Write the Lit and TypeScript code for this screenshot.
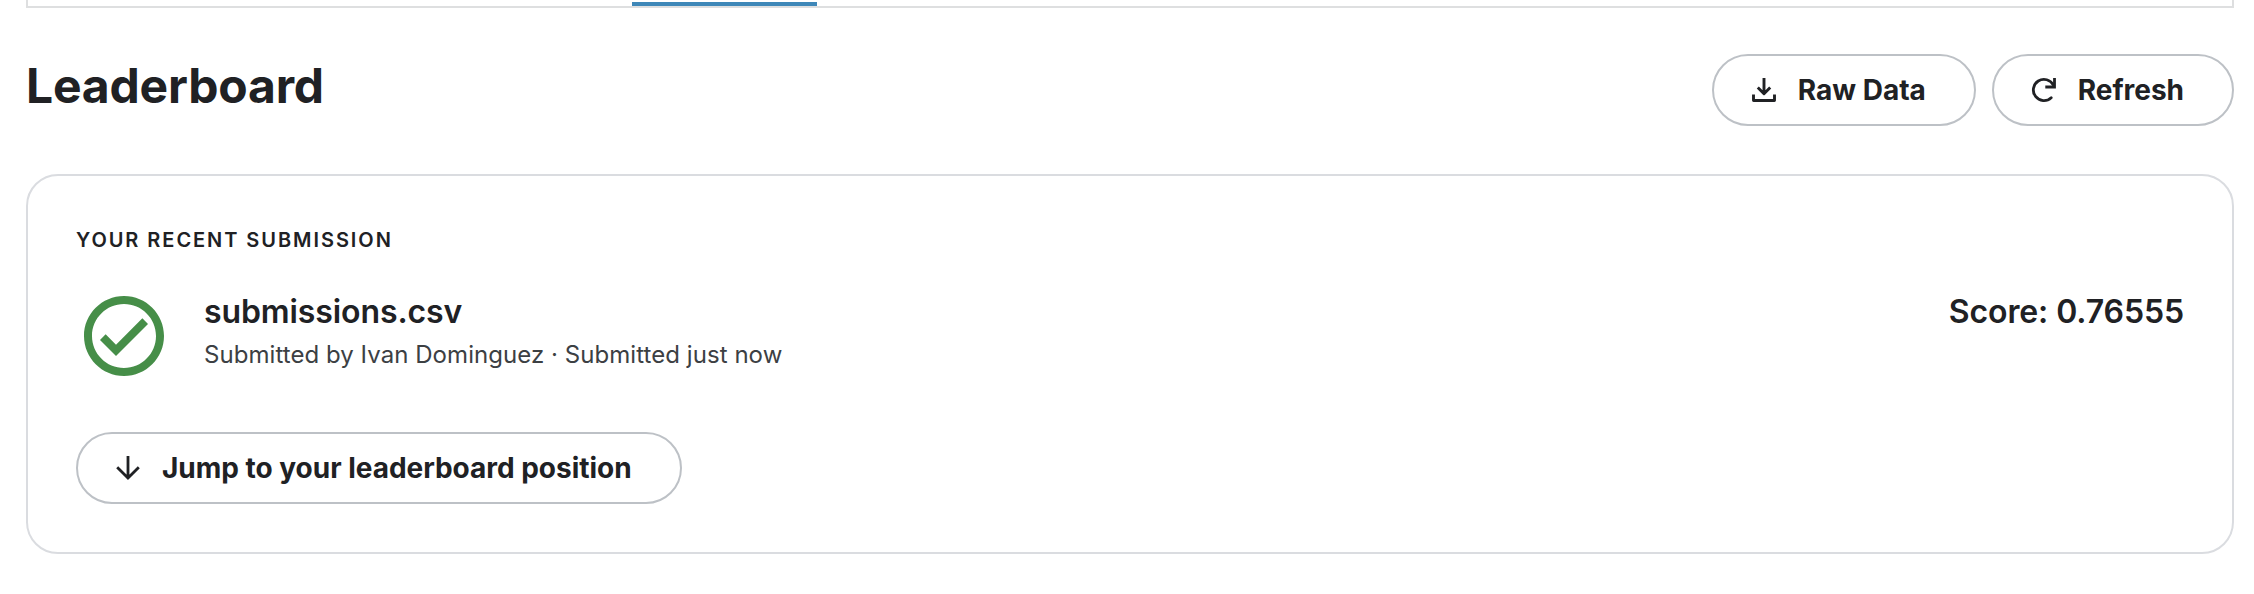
import { LitElement, html, css, svg } from "lit";
import { customElement, property } from "lit/decorators.js";

const icons: Record<string, unknown> = {
  download: svg`<path d="M12 0V15M5.8 9.5L12 15.7L18.2 9.5M1.500 16.500V22.500H22.500V16.500" fill="none" stroke="currentColor" stroke-width="2.9" stroke-linejoin="round"/>`,
  refresh: svg`<path d="M22.500 0V9H13.300" fill="none" stroke="currentColor" stroke-width="2.8"/><path d="M19.200 19.700A10.600 10.600 0 1 1 21.400 7.200" fill="none" stroke="currentColor" stroke-width="2.800" stroke-linecap="round"/>`,
  down: svg`<path d="M12 0V21.500M1.200 11.200L12 22L22.800 11.200" fill="none" stroke="currentColor" stroke-width="2.8"/>`,
};

@customElement("pill-button")
export class PillButton extends LitElement {
  @property() icon = "";
  @property() label = "";

  static styles = css`
    :host { display: block; }
    .pill {
      display: flex; align-items: center; gap: 22px; height: 72px;
      box-sizing: border-box; padding: 0 48px 0 38px;
      border: 2px solid #bdc1c6; border-radius: 36px; background: #fff;
      color: #202124; font: 700 28px/40px Inter, sans-serif; letter-spacing: -0.02px; white-space: nowrap;
    }
    .icon { width: 24px; height: 24px; flex: none; overflow: visible; }
  `;

  render() {
    return html`<button class="pill">
      <svg class="icon" viewBox="0 0 24 24">${icons[this.icon]}</svg><span>${this.label}</span>
    </button>`;
  }
}

@customElement("app-root")
export class AppRoot extends LitElement {
  static styles = css`
    :host {
      display: block; box-sizing: border-box; height: 594px; padding: 0 20px 0 26px;
      background: #fff; color: #202124; font-family: Inter, sans-serif;
    }
    .tabs {
      display: flex; align-items: flex-end; height: 8px; box-sizing: border-box;
      border: 2px solid #dedfe0; border-top: 0; padding-left: 604px;
    }
    .active { width: 185px; height: 4px; background: #3e87b8; }
    .header { display: flex; justify-content: space-between; margin-top: 46px; height: 120px; align-items: flex-start; }
    h1 { margin: 0; padding-top: 2px; font: 700 48px/60px Inter, sans-serif; letter-spacing: -0.18px; }
    .actions { display: flex; gap: 16px; }
    .card {
      box-sizing: border-box; height: 380px; padding: 48px;
      border: 2px solid #dadce0; border-radius: 32px;
      display: flex; flex-direction: column; align-items: flex-start;
    }
    h2 { margin: 0; font: 600 20px/32px Inter, sans-serif; letter-spacing: 1.94px; text-transform: uppercase; }
    .row { display: flex; width: 100%; margin-top: 32px; height: 96px; align-items: flex-start; }
    .check { width: 96px; height: 96px; flex: none; }
    .info { flex: 1; margin-left: 32px; }
    .name { font: 600 32px/40px Inter, sans-serif; letter-spacing: -0.1px; padding-top: 4px; }
    .meta { font: 400 24px/32px Inter, sans-serif; letter-spacing: 0.055px; color: #3c4043; margin-top: 7px; }
    .jump { margin-top: 48px; }
  `;

  render() {
    return html`
      <div class="tabs"><div class="active"></div></div>
      <div class="header">
        <h1>Leaderboard</h1>
        <div class="actions">
          <pill-button icon="download" label="Raw Data"></pill-button>
          <pill-button icon="refresh" label="Refresh"></pill-button>
        </div>
      </div>
      <section class="card">
        <h2>Your recent submission</h2>
        <div class="row">
          <svg class="check" viewBox="0 0 24 24" fill="#468e48">
            <path d="M12 2C6.48 2 2 6.48 2 12s4.48 10 10 10 10-4.48 10-10S17.520 2 12 2zm0 18c-4.410 0-8-3.590-8-8s3.590-8 8-8 8 3.590 8 8-3.590 8-8 8zm4.590-12.420L10 14.170l-2.590-2.580L6 13l4 4 8-8z"/>
          </svg>
          <div class="info">
            <div class="name">submissions.csv</div>
            <div class="meta">Submitted by Ivan Dominguez · Submitted just now</div>
          </div>
          <div class="name">Score: 0.76555</div>
        </div>
        <pill-button class="jump" icon="down" label="Jump to your leaderboard position"></pill-button>
      </section>
    `;
  }
}
